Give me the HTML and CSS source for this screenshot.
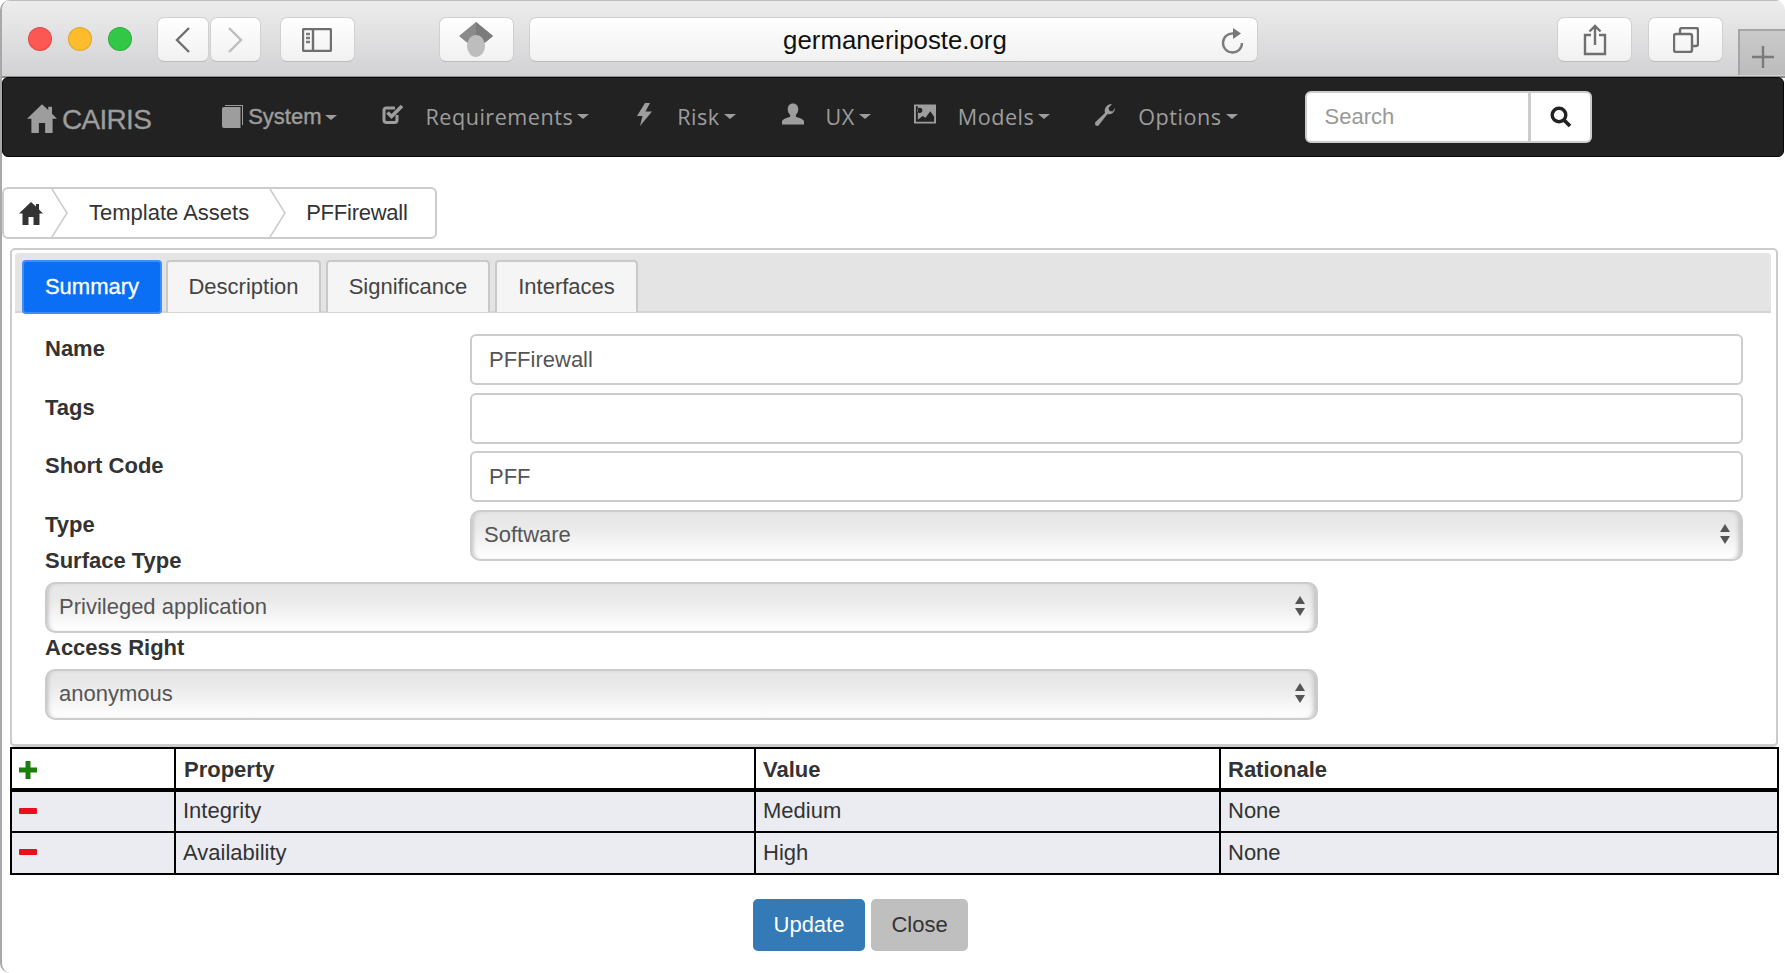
FILE: index.html
```html
<!DOCTYPE html>
<html lang="en">
<head>
<meta charset="utf-8">
<title>CAIRIS - PFFirewall</title>
<link rel="stylesheet" href="styles.css">
</head>
<body>
<div class="window">
  <header class="chrome">
    <div class="lights">
      <span class="light red"></span><span class="light amber"></span><span class="light green"></span>
    </div>
    <div class="cbtn back"><svg width="15" height="26" viewBox="0 0 15 26"><path d="M14 1 2 13l12 12" class="cs dark"/></svg></div>
    <div class="cbtn forward"><svg width="15" height="26" viewBox="0 0 15 26"><path d="M1 1l12 12L1 25" class="cs light-s"/></svg></div>
    <div class="cbtn sidebar"><svg width="30" height="24" viewBox="0 0 30 24"><rect x="1" y="1" width="28" height="22" rx="1.500" class="cs dark"/><path d="M11 1v22" class="cs dark"/><path d="M4 6h4M4 10h4M4 14h4" class="cs mid"/></svg></div>
    <div class="cbtn ext"><svg width="36" height="36" viewBox="0 0 36 36"><path d="M18 0 35 14 18 28 1 14Z" fill="#8a8a8a"/><path d="M18 0 35 14 18 28Z" fill="#7b7b7b"/><ellipse cx="18" cy="24" rx="9" ry="11" fill="#bdbdbd"/></svg></div>
    <div class="cbtn url">
      <span class="url-text">germaneriposte.org</span>
      <svg class="reload" width="24" height="28" viewBox="0 0 24 28"><path d="M13 6.500A9.500 9.500 0 1 0 22 16" class="cs mid"/><path d="M13 1l8 5.500-8 5.500Z" fill="#777"/></svg>
    </div>
    <div class="cbtn share"><svg width="24" height="32" viewBox="0 0 24 32"><path d="M8 11H2v19h20V11h-6" class="cs dark"/><path d="M12 21V2M6.500 7.500 12 2l5.500 5.500" class="cs dark"/></svg></div>
    <div class="cbtn tabs-btn"><svg width="26" height="26" viewBox="0 0 26 26"><rect x="1" y="7" width="18" height="18" rx="2" class="cs dark"/><path d="M7 7V3a2 2 0 0 1 2-2h14a2 2 0 0 1 2 2v14a2 2 0 0 1-2 2h-4" class="cs dark"/></svg></div>
    <div class="newtab"><svg width="24" height="24" viewBox="0 0 24 24"><path d="M12 1v22M1 12h22" class="cs mid"/></svg></div>
  </header>

  <nav class="navbar">
    <a class="brand"><svg class="i-home" width="30" height="30" viewBox="0 0 24 24"><path d="M12 1 0 12.500h3.500V24h6v-8h5v8h6V12.500H24l-4-4V3h-3v2.500Z"/></svg><span>CAIRIS</span></a>
    <a class="nav-sys">
      <svg width="21" height="23" viewBox="0 0 21 23"><path d="M3 0h18v20h-1V1H3Z"/><path d="M2 2h16.500v21H2a2 2 0 0 1-2-2V4a2 2 0 0 1 2-2Z"/></svg>
      <span>System</span><i class="caret"></i>
    </a>
    <a class="nav-item req">
      <span class="ico"><svg width="22" height="21" viewBox="0 0 22 21"><path d="M15 11v5a2.500 2.500 0 0 1-2.500 2.500h-8A2.500 2.500 0 0 1 2 16V6.500A2.500 2.500 0 0 1 4.500 4H13" fill="none" stroke="#9d9d9d" stroke-width="3"/><path d="m5.500 8.500 4 4L20 2" fill="none" stroke="#9d9d9d" stroke-width="3.600"/></svg></span>
      <span>Requirements</span><i class="caret"></i>
    </a>
    <a class="nav-item risk">
      <span class="ico"><svg width="15" height="23" viewBox="0 0 15 23"><path d="M8 0 0 13h5.500L3 23 15 8.500H8.500L13 0Z"/></svg></span>
      <span>Risk</span><i class="caret"></i>
    </a>
    <a class="nav-item ux">
      <span class="ico"><svg width="23" height="22" viewBox="0 0 23 22"><path d="M11.500 0c3.500 0 5.500 2.500 5.500 6 0 2.500-1 4.500-2.500 6v2c4 1 8.500 3 8.500 5v3H0v-3c0-2 4.500-4 8.500-5v-2C7 10.500 6 8.500 6 6c0-3.500 2-6 5.500-6Z"/></svg></span>
      <span>UX</span><i class="caret"></i>
    </a>
    <a class="nav-item models">
      <span class="ico"><svg width="23" height="20" viewBox="0 0 23 20"><path fill-rule="evenodd" d="M0 0h23v20H0ZM2 2v16h19v-5l-4-6-5 7-3-2-5 4V2Zm4 1.500a2.700 2.700 0 1 0 0 5.400 2.700 2.700 0 0 0 0-5.400Z"/></svg></span>
      <span>Models</span><i class="caret"></i>
    </a>
    <a class="nav-item options">
      <span class="ico"><svg width="20" height="23" viewBox="0 0 20 23"><path d="M20 5c0 4-3.500 7-7.500 6L3.500 22.500C2.500 23.500 0 23 0 20.500c0-.8.300-1.300.8-1.800L10 10C8.800 6 11.500 1 17 1l-3.500 4 1 3 3 .5Z"/></svg></span>
      <span>Options</span><i class="caret"></i>
    </a>
    <form class="search">
      <input class="search-input" type="text" placeholder="Search">
      <span class="search-btn"><svg width="22" height="22" viewBox="0 0 22 22"><circle cx="9" cy="9" r="6.800" fill="none" stroke="#222" stroke-width="3.400"/><path d="m13.500 13.500 6.500 6.500" stroke="#222" stroke-width="3.800" fill="none"/></svg></span>
    </form>
  </nav>

  <main class="content">
    <div class="crumbs">
      <svg class="crumb-home" width="24" height="24" viewBox="0 0 24 24"><path d="M12 1 0 12.500h3.500V24h6v-8h5v8h6V12.500H24l-4-4V3h-3v2.500Z"/></svg>
      <svg class="sep sep1" width="17" height="48" viewBox="0 0 17 48"><path d="M1 0l15 24L1 48" fill="none" stroke="#ccc" stroke-width="1.500"/></svg>
      <span class="crumb">Template Assets</span>
      <svg class="sep sep2" width="17" height="48" viewBox="0 0 17 48"><path d="M1 0l15 24L1 48" fill="none" stroke="#ccc" stroke-width="1.500"/></svg>
      <span class="crumb crumb-last">PFFirewall</span>
    </div>

    <section class="panel">
      <ul class="tabs">
        <li class="tab active tab-summary">Summary</li>
        <li class="tab tab-desc">Description</li>
        <li class="tab tab-sig">Significance</li>
        <li class="tab tab-int">Interfaces</li>
      </ul>
      <div class="form">
        <div class="row"><label>Name</label><input class="field" type="text" value="PFFirewall"></div>
        <div class="row tags-row"><label>Tags</label><input class="field" type="text" value=""></div>
        <div class="row"><label>Short Code</label><input class="field" type="text" value="PFF"></div>
        <div class="row type-row">
          <div class="label-stack"><label>Type</label><label class="surface">Surface Type</label></div>
          <div class="select"><span>Software</span><i class="up"></i><i class="down"></i></div>
        </div>
        <div class="select narrow"><span>Privileged application</span><i class="up"></i><i class="down"></i></div>
        <label class="access">Access Right</label>
        <div class="select narrow"><span>anonymous</span><i class="up"></i><i class="down"></i></div>
      </div>
    </section>

    <table class="props">
      <colgroup><col class="c1"><col class="c2"><col class="c3"><col class="c4"></colgroup>
      <thead>
        <tr>
          <th><svg class="pm" width="18" height="18" viewBox="0 0 18 18"><path d="M6.500 0h5v6.500H18v5h-6.500V18h-5v-6.500H0v-5h6.500Z" fill="#1a7f0a"/></svg></th>
          <th>Property</th><th>Value</th><th>Rationale</th>
        </tr>
      </thead>
      <tbody>
        <tr class="first">
          <td><svg class="pm minus" width="18" height="6" viewBox="0 0 18 6"><rect width="18" height="6" rx="1" fill="#e8101c"/></svg></td>
          <td>Integrity</td><td>Medium</td><td>None</td>
        </tr>
        <tr>
          <td><svg class="pm minus" width="18" height="6" viewBox="0 0 18 6"><rect width="18" height="6" rx="1" fill="#e8101c"/></svg></td>
          <td>Availability</td><td>High</td><td>None</td>
        </tr>
      </tbody>
    </table>

    <div class="actions">
      <button class="btn primary" type="button">Update</button>
      <button class="btn secondary" type="button">Close</button>
    </div>
  </main>
</div>
</body>
</html>
```

FILE: styles.css
```css
* { box-sizing: border-box; }
html, body { margin: 0; padding: 0; background: #fff; }
body { font-family: "Liberation Sans", Arial, sans-serif; font-size: 22px; color: #333; overflow: hidden; }

.window {
  width: 1785px;
  height: 973px;
  border-left: 2px solid #a8a8a8;
  border-radius: 10px 10px 0 10px;
  overflow: hidden;
  background: #fff;
}

/* Browser chrome */
.chrome {
  height: 78px;
  display: flex;
  align-items: flex-start;
  padding-top: 17px;
  background: linear-gradient(#eeedee, #d2d1d3);
  border-top: 1px solid #bdbdbd;
  border-bottom: 2px solid #8e8e8e;
}
.lights { display: flex; gap: 16px; margin: 9px 0 0 26px; }
.light { width: 24px; height: 24px; border-radius: 50%; border: 1px solid rgba(0,0,0,.12); }
.light.red { background: #fc5753; }
.light.amber { background: #fdbc2e; }
.light.green { background: #33c748; }

.cbtn {
  height: 45px;
  margin-top: -1px;
  display: flex;
  align-items: center;
  justify-content: center;
  background: linear-gradient(#fff, #f1f1f1);
  border: 1px solid #d0d0d0;
  border-bottom-color: #bcbcbc;
  border-radius: 7px;
}
.back { width: 52px; margin-left: 25px; }
.forward { width: 51px; margin-left: 1px; }
.sidebar { width: 75px; margin-left: 19px; }
.ext { width: 75px; margin-left: 84px; }
.url { width: 730px; margin-left: 15px; position: relative; }
.url-text { font-size: 25.800px; color: #111; margin-left: 3px; padding-top: 1px; }
.reload { position: absolute; right: 13px; top: 9px; }
.share { width: 75px; margin-left: 299px; }
.tabs-btn { width: 75px; margin-left: 16px; }
.newtab {
  width: 47px;
  height: 46px;
  margin: 11px 0 0 15px;
  display: flex;
  align-items: center;
  justify-content: center;
  padding-top: 8px;
  background: linear-gradient(#cbcacb, #bdbcbd);
  border-top: 2px solid #a5a5a5;
  border-left: 2px solid #a5a5a5;
}
.cs { fill: none; stroke-width: 2.400; }
.cs.dark { stroke: #6f6f6f; }
.cs.mid { stroke: #7b7b7b; }
.cs.light-s { stroke: #bdbdbd; }

/* Navbar */
.navbar {
  width: 1782px;
  height: 80px;
  display: flex;
  align-items: center;
  background: #222;
  border: 1px solid #080808;
  border-radius: 6px;
  color: #9d9d9d;
  margin-top: -1px;
}
.navbar svg { fill: #9d9d9d; display: block; }
.brand { display: flex; align-items: center; margin-left: 24px; font-size: 28px; letter-spacing: -.7px; padding-top: 1px; }
.brand span { margin: 4px 0 0 5px; -webkit-text-stroke: .3px #9d9d9d; }
.nav-sys { display: flex; align-items: center; margin-left: 71px; font-size: 22px; -webkit-text-stroke: .4px #9d9d9d; }
.nav-sys span { margin-left: 5px; }
.nav-sys svg { margin-top: -2px; }
.nav-sys .caret { margin-left: 3px; }
.nav-item {
  display: flex;
  align-items: center;
  font-family: "Open Sans", sans-serif;
  font-size: 21.6px;
  letter-spacing: .5px;
  margin-left: 45px;
  padding-bottom: 2px;
}
.risk { margin-left: 44px; }
.ux { margin-left: 46px; }
.models { margin-left: 43px; }
.options { margin-left: 44px; }
.ico { width: 22px; margin-right: 22px; display: flex; justify-content: center; margin-top: -4px; }
.caret {
  display: inline-block;
  width: 0; height: 0;
  margin-left: 4px;
  border-top: 5px solid #9d9d9d;
  border-left: 6px solid transparent;
  border-right: 6px solid transparent;
}
.search { display: flex; margin-left: 67px; width: 287px; height: 52px; }
.search-input {
  width: 226px;
  height: 52px;
  padding: 0 18px;
  border: 2px solid #ccc;
  border-right-width: 3px;
  border-radius: 6px 0 0 6px;
  font: 22px "Liberation Sans", Arial, sans-serif;
  background: #fff;
  outline: 0;
}
.search-input::placeholder { color: #999; opacity: 1; }
.search-btn {
  flex: 1;
  display: flex;
  align-items: center;
  justify-content: center;
  padding-left: 2px;
  background: #fff;
  border: 2px solid #ccc;
  border-left: 0;
  border-radius: 0 6px 6px 0;
}

/* Breadcrumb */
.content { padding-top: 30px; }
.crumbs {
  width: 435px;
  height: 52px;
  display: flex;
  align-items: center;
  border: 2px solid #ccc;
  border-radius: 6px;
  color: #333;
}
.crumb-home { margin-left: 15px; fill: #333; }
.sep1 { margin-left: 8px; }
.sep2 { margin-left: 20px; }
.crumb { margin-left: 21px; }
.crumb-last { margin-left: 20px; letter-spacing: -.25px; }

/* Panel and tabs */
.panel {
  width: 1768px;
  height: 499px;
  margin: 9px 0 0 8px;
  padding: 3px 5px 0 3px;
  border: 2px solid #ccc;
  border-bottom-width: 3px;
  border-radius: 5px;
}
.tabs {
  list-style: none;
  margin: 0;
  height: 60px;
  padding: 7px 0 0 7px;
  display: flex;
  background: #e4e4e4;
  border-bottom: 2px solid #d4d4d4;
  border-radius: 4px 4px 0 0;
}
.tab {
  height: 52px;
  margin-right: 5px;
  display: flex;
  align-items: center;
  justify-content: center;
  background: #f5f5f5;
  border: 2px solid #c9c9c9;
  border-bottom: 0;
  border-radius: 4px 4px 0 0;
  color: #444;
}
.tab-summary { width: 140px; margin-right: 4px; }
.tab-desc { width: 155px; }
.tab-sig { width: 164px; margin-right: 5px; }
.tab-int { width: 143px; }
.tab.active {
  height: 54px;
  background: #0a6ff5;
  border: 2px solid #3d8ef8;
  border-radius: 4px;
  color: #fff;
  -webkit-text-stroke: .3px #fff;
}

/* Form */
.form { padding: 21px 28px 0 30px; }
.row { display: flex; margin-bottom: 8px; }
.row label { width: 425px; flex: none; }
.tags-row { margin-bottom: 7px; }
label { display: block; font-weight: 700; line-height: 30px; color: #333; }
.field, .select {
  flex: 1;
  width: 100%;
  height: 51px;
  border: 2px solid #ccc;
  border-radius: 6px;
  font: 22px "Liberation Sans", Arial, sans-serif;
  color: #555;
  background: #fff;
  outline: 0;
}
.field { padding: 0 17px; }
.select {
  position: relative;
  display: flex;
  align-items: center;
  padding: 0 0 2px 12px;
  border-radius: 10px;
  background: linear-gradient(#e6e6e6, #e9e9e9 30%, #fff);
  box-shadow: inset 4px 0 4px -3px #bbb, inset -5px 0 5px -3px #bbb;
}
.select.narrow { flex: none; width: 1273px; }
.select i { position: absolute; right: 11px; width: 0; height: 0; border-left: 5px solid transparent; border-right: 5px solid transparent; }
.select .up { top: 12px; border-bottom: 8px solid #555; }
.select .down { top: 24px; border-top: 8px solid #555; }
.type-row { margin-bottom: 6px; }
.label-stack { width: 425px; flex: none; }
.surface { margin-top: 6px; }
.access { margin-bottom: 6px; }

/* Table */
.props {
  width: 1767px;
  margin: 0 0 0 8px;
  border-collapse: collapse;
  table-layout: fixed;
  border: 2px solid #000;
}
.c1 { width: 164px; }
.c2 { width: 580px; }
.c3 { width: 465px; }
.c4 { width: 558px; }
.props th, .props td { border: 2px solid #000; padding: 0 7px; text-align: left; }
.props th { height: 42px; border-bottom-width: 4px; color: #333; padding-top: 2px; }
.props th:nth-child(2) { padding-left: 8px; }
.props td { height: 42px; background: #eaecf2; color: #333; }
.props .first td { padding-bottom: 2px; }
.pm { display: block; }
.minus { margin-top: -2px; }
.first .minus { margin-top: 0; }

/* Buttons */
.actions { display: flex; justify-content: flex-start; gap: 6px; margin: 24px 0 0 751px; }
.btn {
  height: 52px;
  border: 0;
  border-radius: 5px;
  font: 22px "Liberation Sans", Arial, sans-serif;
}
.primary { width: 112px; background: #337ab7; color: #fff; }
.secondary { width: 97px; background: #bfbfbf; color: #333; }
```
